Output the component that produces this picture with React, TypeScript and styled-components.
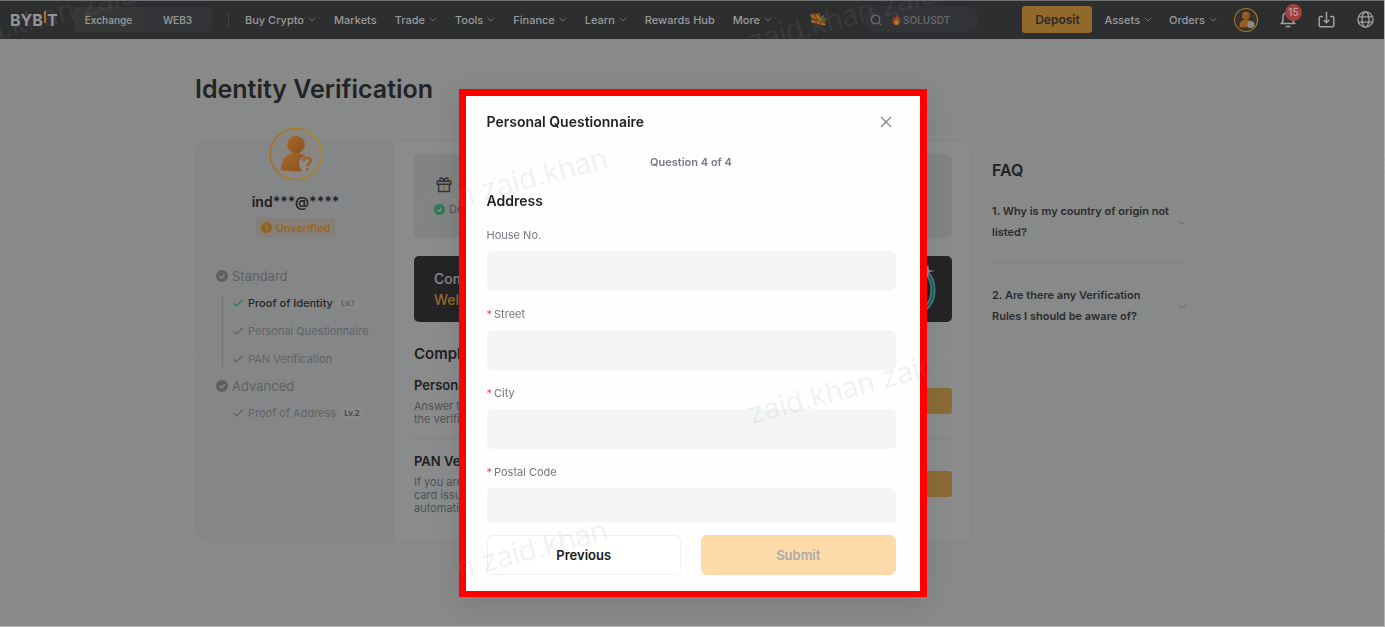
import React from 'react';
import styled, { createGlobalStyle, css } from 'styled-components';

const GlobalStyle = createGlobalStyle`
  *, *::before, *::after { box-sizing: border-box; }
  html, body { margin: 0; height: 100%; }
  #root { height: 100%; }
  body {
    background: #888989;
    color: #1f2022;
    font-family: Inter, "Liberation Sans", sans-serif;
    overflow: hidden;
  }
  button, input { font: inherit; color: inherit; }
  h1, h2, h3, p, ul { margin: 0; padding: 0; }
  ul { list-style: none; }
`;

const Page = styled.div`
  min-height: 100%;
  border: solid #b4b5b6;
  border-width: 0 1px 1px 0;
`;

/* ---------- top bar ---------- */

const TopBar = styled.header`
  display: flex;
  align-items: center;
  height: 39px;
  padding: 0 10px 1px;
  background: #2d2e2f;
  border-top: 1px solid #707273;
  color: #9a9b9c;
  font-size: 11px;
  font-weight: 500;
`;

const LogoLink = styled.a`
  display: flex;
  align-items: center;
  width: 48px;
  margin-right: 16px;
  color: #949596;
  font-size: 16px;
  font-weight: 700;
  line-height: 16px;
  text-decoration: none;
`;

const LogoBar = styled.span`
  flex: none;
  width: 2px;
  height: 12px;
  margin: 0 1px 6px;
  background: #a8721f;
`;

const ModeSwitch = styled.div`
  display: flex;
  width: 138px;
  height: 25px;
  margin-right: 16px;
  border-radius: 3px;
  background: #323438;
`;

const ModeButton = styled.button<{ $active?: boolean }>`
  flex: 1;
  padding: 0;
  border: 0;
  border-radius: 3px;
  background: ${(p) => (p.$active ? '#363837' : 'transparent')};
  color: #929394;
  font-size: 10px;
  font-weight: 600;
`;

const Rule = styled.span`
  width: 1px;
  height: 16px;
  margin-right: 16px;
  background: #434446;
`;

const Nav = styled.nav<{ $gap: number }>`
  display: flex;
  align-items: center;
  gap: ${(p) => p.$gap}px;
`;

const NavLink = styled.a`
  display: flex;
  align-items: center;
  gap: 4px;
  color: inherit;
  text-decoration: none;
  white-space: nowrap;
`;

const Campaign = styled.svg`
  flex: none;
  margin-left: 36px;
`;

const Search = styled.label`
  display: flex;
  align-items: center;
  gap: 9px;
  width: 115px;
  height: 27px;
  margin-left: 36px;
  padding: 0 6px;
  border-radius: 14px;
  background: #313337;
  color: #6b6d71;
  input {
    flex: 1;
    width: 0;
    min-width: 0;
    padding: 0;
    border: 0;
    outline: 0;
    background: transparent;
    font-size: 10px;
    font-weight: 600;
  }
  input::placeholder { color: #65676b; opacity: 1; }
`;

const SearchHint = styled.span`
  display: flex;
  flex: 1;
  align-items: center;
  gap: 1px;
`;

const AccountArea = styled.div`
  display: flex;
  align-items: center;
  margin-left: auto;
`;

const DepositButton = styled.button`
  width: 70px;
  height: 27px;
  margin-right: 12px;
  padding: 0;
  border: 0;
  border-radius: 3px;
  background: #91692a;
  color: #2b2925;
  font-size: 12px;
  font-weight: 600;
`;

const IconButtons = styled.div`
  display: flex;
  align-items: center;
  gap: 22px;
  margin-left: 17px;
`;

const IconButton = styled.button`
  position: relative;
  display: flex;
  padding: 0;
  border: 0;
  background: none;
  color: #a0a1a2;
`;

const CountBadge = styled.span`
  position: absolute;
  top: -7px;
  right: -6px;
  width: 17px;
  height: 17px;
  border-radius: 50%;
  background: #a3413c;
  color: #b9a5a4;
  font-size: 10px;
  line-height: 17px;
  text-align: center;
`;

/* ---------- page body ---------- */

const Main = styled.main`
  width: calc(100% - 48px);
  max-width: 996px;
  margin: 0 auto;
  padding: 34px 0 0 1px;
`;

const PageTitle = styled.h1`
  font-size: 25px;
  font-weight: 600;
  line-height: 32px;
  color: #222325;
`;

const Columns = styled.div`
  display: flex;
  align-items: flex-start;
  gap: 20px;
  margin-top: 35px;
`;

const Card = styled.section`
  display: flex;
  flex: 1;
  min-width: 0;
  min-height: 402px;
  border: 1px solid #838485;
  border-radius: 12px;
  background: #8a8b8c;
`;

const Profile = styled.aside`
  display: flex;
  flex-direction: column;
  align-items: center;
  width: 199px;
  flex: none;
  border-radius: 12px 0 0 12px;
  background: #848687;
`;

const AvatarSlot = styled.div`
  height: 54px;
  margin-top: -14px;
`;

const UserName = styled.p`
  margin-top: 11px;
  font-size: 14px;
  font-weight: 600;
  line-height: 20px;
`;

const StatusTag = styled.span`
  display: flex;
  align-items: center;
  gap: 4px;
  height: 19px;
  margin-top: 6px;
  padding: 0 5px;
  border-radius: 3px;
  background: #857f79;
  color: #95631b;
  font-size: 11px;
  font-weight: 500;
`;

const Steps = styled.div`
  display: flex;
  flex-direction: column;
  gap: 9px;
  width: 100%;
  margin-top: 29px;
  padding-left: 20px;
`;

const StepTitle = styled.h3`
  display: flex;
  align-items: center;
  gap: 4px;
  color: #5f6164;
  font-size: 13px;
  font-weight: 400;
  line-height: 20px;
`;

const StepList = styled.ul<{ $line?: boolean }>`
  display: flex;
  flex-direction: column;
  gap: 12px;
  margin-left: 6px;
  padding-left: 10px;
  border-left: 1px solid ${(p) => (p.$line ? '#727476' : 'transparent')};
`;

const Step = styled.li<{ $done?: boolean }>`
  display: flex;
  align-items: center;
  gap: 5px;
  color: ${(p) => (p.$done ? '#242527' : '#616366')};
  font-size: 11px;
  font-weight: ${(p) => (p.$done ? 500 : 400)};
  line-height: 16px;
  white-space: nowrap;
  svg { color: ${(p) => (p.$done ? '#2b7952' : '#616366')}; }
`;

const Level = styled.span<{ $dark?: boolean }>`
  margin-left: -1px;
  padding: 0 4px;
  border-radius: 2px;
  background: #888989;
  color: ${(p) => (p.$dark ? '#3b3c3e' : '#55575a')};
  font-size: 8px;
  font-weight: 500;
  line-height: 12px;
`;

const Content = styled.div`
  flex: 1;
  min-width: 0;
  padding: 13px 19px 0;
`;

const Rewards = styled.div`
  display: flex;
  flex-direction: column;
  gap: 9px;
  height: 84px;
  padding: 22px 20px 0;
  border-radius: 6px;
  background: #828484;
  color: #4d4f52;
  font-size: 11px;
`;

const RewardLine = styled.div`
  display: flex;
  align-items: center;
  gap: 4px;
`;

const Banner = styled.div`
  display: flex;
  justify-content: space-between;
  height: 66px;
  margin-top: 18px;
  padding-left: 20px;
  overflow: hidden;
  border-radius: 5px;
  background: #242426;
`;

const BannerText = styled.div`
  padding-top: 12px;
  color: #8b8b8b;
  font-size: 14px;
  font-weight: 500;
  line-height: 21px;
  em { color: #93692a; font-style: normal; display: block; }
`;

const SectionTitle = styled.h2`
  margin: 22px 0 12px;
  font-size: 15px;
  font-weight: 600;
  line-height: 20px;
`;

const Task = styled.section`
  display: flex;
  align-items: center;
  justify-content: space-between;
  & + & {
    margin-top: 12px;
    padding-top: 13px;
    border-top: 1px solid #818284;
  }
  h3 { font-size: 13px; font-weight: 600; line-height: 18px; }
  p {
    margin-top: 6px;
    color: #4f5154;
    font-size: 11px;
    line-height: 13px;
  }
`;

const TaskButton = styled.button`
  width: 90px;
  height: 26px;
  border: 0;
  border-radius: 3px;
  background: #8b6a35;
`;

const Faq = styled.aside`
  width: 198px;
  flex: none;
  padding-top: 20px;
  h2 { font-size: 16px; font-weight: 600; line-height: 20px; }
`;

const FaqItem = styled.button`
  display: flex;
  align-items: center;
  justify-content: space-between;
  width: 100%;
  padding: 21px 0 20px;
  border: 0;
  background: none;
  color: #2b2c2e;
  text-align: left;
  font-size: 11px;
  font-weight: 600;
  line-height: 21px;
  white-space: nowrap;
  & + & { border-top: 1px solid #828384; }
  svg { flex: none; margin-right: 4px; color: #4c4d4f; }
`;

/* ---------- dialog ---------- */

const Backdrop = styled.div`
  position: fixed;
  inset: 0;
  display: flex;
  align-items: flex-start;
  justify-content: center;
  padding-top: 89px;
`;

const Dialog = styled.section`
  display: flex;
  flex-direction: column;
  width: 468px;
  height: calc(100vh - 119px);
  padding: 16px 24px 16px 21px;
  border: 7px solid #ff0000;
  border-bottom-width: 6px;
  background: #fefefe;
  box-shadow: 0 6px 24px rgba(0, 0, 0, 0.1);
`;

const DialogHead = styled.div`
  display: flex;
  align-items: center;
  justify-content: space-between;
  h2 { font-size: 14px; font-weight: 600; line-height: 20px; }
  button {
    display: flex;
    padding: 4px;
    border: 0;
    background: none;
    color: #86888e;
  }
`;

const Progress = styled.p`
  margin-top: 22px;
  color: #777981;
  font-size: 11px;
  font-weight: 600;
  line-height: 16px;
  text-align: center;
`;

const Fields = styled.form`
  flex: 1;
  min-height: 0;
  margin-top: 21px;
  overflow: hidden;
  h3 { margin-bottom: 16px; font-size: 14px; font-weight: 600; line-height: 20px; }
`;

const Field = styled.label<{ $required?: boolean }>`
  display: block;
  margin-bottom: 15px;
  color: #757780;
  font-size: 11px;
  line-height: 16px;
  ${(p) =>
    p.$required &&
    css`
      &::before { content: '*'; margin-right: 2px; color: #ef4a4f; }
    `}
`;

const TextInput = styled.input`
  display: block;
  width: 100%;
  height: 40px;
  margin-top: 8px;
  padding: 0 12px;
  border: 0;
  border-radius: 6px;
  outline: 0;
  background: #f3f5f6;
`;

const Actions = styled.div`
  display: grid;
  grid-template-columns: 1fr 1fr;
  gap: 20px;
  margin-top: 13px;
`;

const ActionButton = styled.button<{ $primary?: boolean }>`
  height: 40px;
  border: 1px solid ${(p) => (p.$primary ? '#fcdba9' : '#eff0f2')};
  border-radius: 6px;
  background: ${(p) => (p.$primary ? '#fcdba9' : '#ffffff')};
  color: ${(p) => (p.$primary ? '#adaaa5' : '#17181a')};
  font-size: 13px;
  font-weight: 600;
`;

/* ---------- user watermark ---------- */

const WatermarkLayer = styled.div`
  position: fixed;
  inset: 0;
  overflow: hidden;
  pointer-events: none;
`;

const Mark = styled.span<{ $x: number; $y: number }>`
  position: absolute;
  left: ${(p) => p.$x}px;
  top: ${(p) => p.$y}px;
  color: rgba(134, 140, 150, 0.14);
  font-size: 29px;
  font-weight: 300;
  line-height: 32px;
  white-space: nowrap;
  transform: rotate(-15deg);
  transform-origin: left bottom;
`;

const marks = [
  [-47, 26], [753, 26], [353, 210], [1153, 210],
  [-47, 398], [753, 398], [353, 582], [1153, 582],
];

/* ---------- drawings ---------- */

const Chevron = () => (
  <svg width="8" height="5" viewBox="0 0 8 5" fill="none" stroke="currentColor" opacity="0.6">
    <path d="M.7.7 4 4 7.3.7" />
  </svg>
);

const Tick = () => (
  <svg width="10" height="8" viewBox="0 0 10 8" fill="none" stroke="currentColor" strokeWidth="1.2">
    <path d="M.5 4.2 3.4 7 9.5 1" />
  </svg>
);

const RoundTick = ({ color, size }: { color: string; size: number }) => (
  <svg width={size} height={size} viewBox="0 0 12 12" fill="none">
    <circle cx="6" cy="6" r="6" fill={color} />
    <path d="m3.4 6.1 1.9 1.8 3.4-3.5" stroke="#8a8b8c" strokeWidth="1.4" />
  </svg>
);

const Person = ({ size, question }: { size: number; question?: boolean }) => (
  <svg width={size} height={size} viewBox="0 0 54 54">
    <defs>
      <linearGradient id={`ring${size}`} x1="0" x2="1">
        <stop stopColor="#a86d28" />
        <stop offset="1" stopColor="#a28b20" />
      </linearGradient>
      <linearGradient id={`skin${size}`} x1="0" y1="0" x2="1" y2="1">
        <stop stopColor="#a3692d" />
        <stop offset="1" stopColor="#8a5018" />
      </linearGradient>
    </defs>
    <circle cx="27" cy="27" r="25.8" fill={question ? '#888583' : '#37322b'} stroke={`url(#ring${size})`} strokeWidth={question ? 1.6 : 2.4} />
    <path d="M12 43c0-10 5-17 15-17s15 7 15 17c-7 1.500-23 1.500-30 0z" fill={`url(#skin${size})`} />
    <circle cx="27" cy="17.500" r="8.800" fill={`url(#skin${size})`} />
    <circle cx="38" cy="37" r="8" fill="#8c8b8a" />
    {question && (
      <g fill="none" stroke="#9c6224" strokeWidth="2.600">
        <path d="M34.400 34.200c0-4.600 7.600-4.600 7.600-.4 0 2.800-3.600 2.600-3.600 5.600" />
        <path d="M38.400 41v2.600" />
      </g>
    )}
  </svg>
);

const Gift = () => (
  <svg width="19" height="17" viewBox="0 0 19 17" fill="none" stroke="#323335" strokeWidth="1.400">
    <path d="M3.200 5.200h13.600v3H3.200zM4.600 8.200v7.300h10.800V8.200M6 5C5.400 3 6.200 2 7.400 2S9.500 3.400 10 5c.5-1.600 1.400-3 2.600-3S14.600 3 14 5" />
    <path d="M10 9.500v4" stroke="#9c6a1c" strokeWidth="2.200" />
    <path d="m16.200 2.600 1.600-1.600" stroke="#9c6a1c" />
  </svg>
);

const Flame = () => (
  <svg width="11" height="13" viewBox="0 0 11 13">
    <path d="M5.600.6c.4 2.200 3.900 3.600 3.900 7.500A4.200 4.200 0 0 1 5.400 12.400 4.200 4.200 0 0 1 1.300 8.100C1.300 6 2.600 5.200 3 3.600c.9.500 1.200 1.100 1.400 1.900C5.300 4.200 5.800 2.500 5.600.6z" fill="#984022" />
    <path d="M5.500 6c.3 1.400 2 1.900 2 3.800a2.100 2.100 0 0 1-4.200 0C3.300 8.400 5 7.700 5.500 6z" fill="#a88532" />
  </svg>
);

const CampaignArt = () => (
  <Campaign width="20" height="18" viewBox="0 0 20 18" fill="none">
    <path d="M2 3.500 6 2l2 2 3-2.500 2.500 4L17 9l1 5-5 .5-5-2-5-1 1.500-3z" fill="#7c4a1c" />
    <path d="m3 4 5 4M8 3l4 6M3 10l8 2M11 11l6 3" stroke="#a27827" strokeWidth="1.600" />
    <path d="m13 10 3-6M15 11l3-4" stroke="#566b2b" strokeWidth="1.600" />
    <path d="m6 7 3 5M12 12l4-1" stroke="#873b20" strokeWidth="1.400" />
  </Campaign>
);

const Ring = () => (
  <svg width="70" height="66" viewBox="0 0 70 66" fill="none">
    <ellipse cx="34" cy="34" rx="17" ry="22" stroke="#3f8286" strokeWidth="5" />
    <ellipse cx="34" cy="34" rx="17" ry="22" stroke="#1f4f53" strokeWidth="1.500" />
    <path d="m46 8 1 6 6 1-6 1-1 6-2-6-5-1 5-1z" fill="#8b9293" />
  </svg>
);

const Bell = () => (
  <svg width="16" height="17" viewBox="0 0 16 17" fill="none" stroke="currentColor" strokeWidth="1.500">
    <path d="M1.200 12.600h13.600L13 10V6.500C13 3.600 11 1.600 8 1.600S3 3.600 3 6.500V10zM5.600 15.600h4.800" strokeLinejoin="round" />
  </svg>
);

const Download = () => (
  <svg width="17" height="17" viewBox="0 0 17 17" fill="none" stroke="currentColor" strokeWidth="1.500">
    <path d="M5 5.500H2.600A1.400 1.400 0 0 0 1.200 7v7.400a1.400 1.400 0 0 0 1.400 1.400h11.800a1.400 1.400 0 0 0 1.400-1.400V7a1.400 1.400 0 0 0-1.400-1.500H12M8.500.8v11M5.700 9l2.800 2.800L11.300 9" />
  </svg>
);

const Globe = () => (
  <svg width="17" height="17" viewBox="0 0 17 17" fill="none" stroke="currentColor" strokeWidth="1.300">
    <circle cx="8.500" cy="8.500" r="7.600" />
    <ellipse cx="8.500" cy="8.500" rx="3.500" ry="7.600" />
    <path d="M1.500 5.800h14M1.500 11.200h14" />
  </svg>
);

const navItems: [string, boolean][] = [
  ['Buy Crypto', true], ['Markets', false], ['Trade', true], ['Tools', true],
  ['Finance', true], ['Learn', true], ['Rewards Hub', false], ['More', true],
];

const fields = [
  { name: 'House No.', required: false },
  { name: 'Street', required: true },
  { name: 'City', required: true },
  { name: 'Postal Code', required: true },
];

export default function App() {
  return (
    <Page>
      <GlobalStyle />
      <TopBar>
        <LogoLink href="#" aria-label="Bybit">
          BYB<LogoBar />T
        </LogoLink>
        <ModeSwitch>
          <ModeButton $active>Exchange</ModeButton>
          <ModeButton>WEB3</ModeButton>
        </ModeSwitch>
        <Rule />
        <Nav $gap={18}>
          {navItems.map(([label, menu]) => (
            <NavLink href="#" key={label}>
              {label}
              {menu && <Chevron />}
            </NavLink>
          ))}
        </Nav>
        <CampaignArt />
        <Search>
          <svg width="12" height="12" viewBox="0 0 12 12" fill="none" stroke="currentColor" strokeWidth="1.200">
            <circle cx="5.500" cy="5.500" r="4.300" />
            <path d="m8.600 8.600 2.400 2.400" />
          </svg>
          <SearchHint>
            <Flame />
            <input aria-label="Search" placeholder="SOLUSDT" />
          </SearchHint>
        </Search>
        <AccountArea>
          <DepositButton>Deposit</DepositButton>
          <Nav $gap={17}>
            <NavLink href="#">Assets<Chevron /></NavLink>
            <NavLink href="#">Orders<Chevron /></NavLink>
          </Nav>
          <IconButtons>
            <IconButton aria-label="Account"><Person size={24} /></IconButton>
            <IconButton aria-label="Notifications">
              <Bell />
              <CountBadge>15</CountBadge>
            </IconButton>
            <IconButton aria-label="Download"><Download /></IconButton>
            <IconButton aria-label="Language"><Globe /></IconButton>
          </IconButtons>
        </AccountArea>
      </TopBar>

      <Main>
        <PageTitle>Identity Verification</PageTitle>
        <Columns>
          <Card>
            <Profile>
              <AvatarSlot><Person size={54} question /></AvatarSlot>
              <UserName>ind***@****</UserName>
              <StatusTag>
                <svg width="11" height="11" viewBox="0 0 11 11">
                  <circle cx="5.500" cy="5.500" r="5.500" fill="#95631b" />
                  <path d="M5.500 2.400v3.800M5.500 7.400v1.300" stroke="#857f79" strokeWidth="1.300" />
                </svg>
                Unverified
              </StatusTag>
              <Steps>
                <StepTitle><RoundTick color="#5c5e61" size={12} />Standard</StepTitle>
                <StepList $line>
                  <Step $done><Tick />Proof of Identity<Level>Lv.1</Level></Step>
                  <Step><Tick />Personal Questionnaire</Step>
                  <Step><Tick />PAN Verification</Step>
                </StepList>
                <StepTitle><RoundTick color="#5c5e61" size={12} />Advanced</StepTitle>
                <StepList>
                  <Step><Tick />Proof of Address<Level $dark>Lv.2</Level></Step>
                </StepList>
              </Steps>
            </Profile>
            <Content>
              <Rewards>
                <RewardLine><Gift /></RewardLine>
                <RewardLine><RoundTick color="#2b7952" size={11} />Deposit</RewardLine>
              </Rewards>
              <Banner>
                <BannerText>Complete<em>Welcome</em></BannerText>
                <Ring />
              </Banner>
              <SectionTitle>Complete</SectionTitle>
              <Task>
                <div>
                  <h3>Personal</h3>
                  <p>Answer these<br />the verification</p>
                </div>
                <TaskButton aria-label="Personal Questionnaire" />
              </Task>
              <Task>
                <div>
                  <h3>PAN Verification</h3>
                  <p>If you are<br />card issued<br />automatically</p>
                </div>
                <TaskButton aria-label="PAN Verification" />
              </Task>
            </Content>
          </Card>
          <Faq>
            <h2>FAQ</h2>
            <FaqItem>
              <span>1. Why is my country of origin not<br />listed?</span>
              <Chevron />
            </FaqItem>
            <FaqItem>
              <span>2. Are there any Verification<br />Rules I should be aware of?</span>
              <Chevron />
            </FaqItem>
          </Faq>
        </Columns>
      </Main>

      <Backdrop>
        <Dialog role="dialog" aria-modal="true" aria-labelledby="dialog-title">
          <DialogHead>
            <h2 id="dialog-title">Personal Questionnaire</h2>
            <button aria-label="Close">
              <svg width="12" height="12" viewBox="0 0 12 12" fill="none" stroke="currentColor" strokeWidth="1.400">
                <path d="m1 1 10 10M11 1 1 11" />
              </svg>
            </button>
          </DialogHead>
          <Progress>Question 4 of 4</Progress>
          <Fields id="address-form">
            <h3>Address</h3>
            {fields.map((f) => (
              <Field key={f.name} $required={f.required}>
                {f.name}
                <TextInput name={f.name} required={f.required} />
              </Field>
            ))}
          </Fields>
          <Actions>
            <ActionButton type="button">Previous</ActionButton>
            <ActionButton type="submit" form="address-form" $primary disabled>Submit</ActionButton>
          </Actions>
        </Dialog>
      </Backdrop>

      <WatermarkLayer aria-hidden="true">
        {marks.map(([x, y]) => (
          <Mark key={`${x},${y}`} $x={x} $y={y}>zaid.khan zaid.khan</Mark>
        ))}
      </WatermarkLayer>
    </Page>
  );
}
